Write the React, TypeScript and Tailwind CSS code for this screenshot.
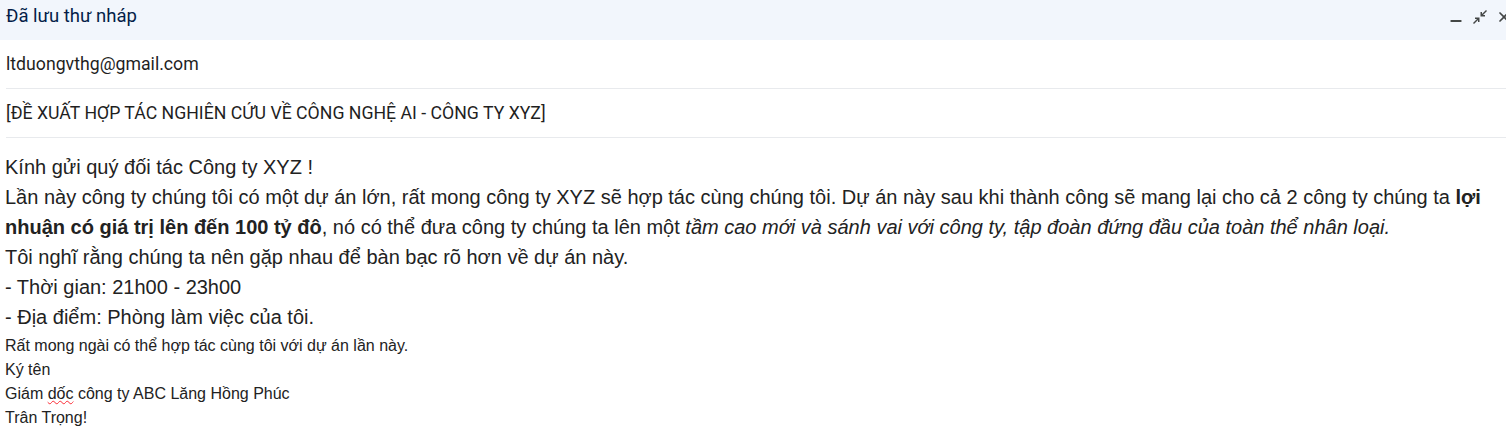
import { Minus, X } from "lucide-react";

const ExitFullIcon = () => (
  <svg width="16" height="16" viewBox="0 0 16 16" fill="#444746">
    <path d="M14 1 L15 2 L11 6 L13 6 L13 7.5 L8.5 7.5 L8.5 3 L10 3 L10 5 Z" />
    <path d="M2 15 L1 14 L5 10 L3 10 L3 8.5 L7.5 8.5 L7.5 13 L6 13 L6 11 Z" />
  </svg>
);

const App = () => {
  return (
    <div className="w-[1506px] h-[426px] overflow-hidden bg-white">
      {/* Header */}
      <div className="h-10 bg-[#f2f6fc] flex items-center justify-between pl-[6px] pr-0 pb-[7px]">
        <span className="text-[18.5px] text-[#041e49] font-['Roboto',sans-serif]">
          Đã lưu thư nháp
        </span>
        <div className="flex items-center gap-[8px] text-[#444746] -mr-[6px]">
          <Minus size={16} strokeWidth={3} className="mt-[8px]" />
          <ExitFullIcon />
          <X size={16} strokeWidth={2.5} />
        </div>
      </div>

      {/* Recipients */}
      <div className="pl-[6px]">
        <div className="h-[49px] flex items-center border-b border-[#e8eaed] text-[17.7px] text-[#1f1f1f] font-['Roboto',sans-serif]">
          ltduongvthg@gmail.com
        </div>
        <div className="h-[49px] flex items-center border-b border-[#e8eaed] text-[17.7px] text-[#1f1f1f] font-['Roboto',sans-serif]">
          [ĐỀ XUẤT HỢP TÁC NGHIÊN CỨU VỀ CÔNG NGHỆ AI - CÔNG TY XYZ]
        </div>
      </div>

      {/* Body */}
      <div className="pl-[5px] pr-[14px] pt-[14px] font-['Liberation_Sans',Arial,sans-serif] text-[#222]">
        <div className="text-[20px] leading-[30px]">
          <div>Kính gửi quý đối tác Công ty XYZ !</div>
          <div>
            Lần này công ty chúng tôi có một dự án lớn, rất mong công ty XYZ sẽ hợp tác cùng chúng tôi. Dự án này
            sau khi thành công sẽ mang lại cho cả 2 công ty chúng ta{" "}
            <b>lợi nhuận có giá trị lên đến 100 tỷ đô</b>, nó có thể đưa công ty chúng ta lên một{" "}
            <i>tầm cao mới và sánh vai với công ty, tập đoàn đứng đầu của toàn thể nhân loại.</i>
          </div>
          <div>Tôi nghĩ rằng chúng ta nên gặp nhau để bàn bạc rõ hơn về dự án này.</div>
          <div>- Thời gian: 21h00 - 23h00</div>
          <div>- Địa điểm: Phòng làm việc của tôi.</div>
        </div>
        <div className="text-[16px] leading-[24px] mt-[2px]">
          <div>Rất mong ngài có thể hợp tác cùng tôi với dự án lần này.</div>
          <div>Ký tên</div>
          <div>
            Giám <span className="underline decoration-wavy decoration-red-500 decoration-1">dốc</span> công ty ABC
            Lăng Hồng Phúc
          </div>
          <div>Trân Trọng!</div>
        </div>
      </div>
    </div>
  );
};

export default App;
